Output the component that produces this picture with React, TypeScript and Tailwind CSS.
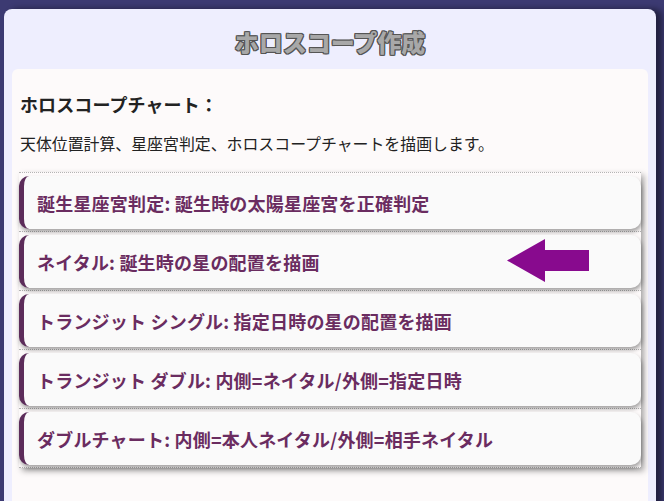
import React from "react";

const items = [
  "誕生星座宮判定: 誕生時の太陽星座宮を正確判定",
  "ネイタル: 誕生時の星の配置を描画",
  "トランジット シングル: 指定日時の星の配置を描画",
  "トランジット ダブル: 内側=ネイタル/外側=指定日時",
  "ダブルチャート: 内側=本人ネイタル/外側=相手ネイタル",
];

export default function App() {
  return (
    <div
      className="h-[501px] overflow-hidden bg-[#3c3a72] pl-[4px] pr-[8px] pt-[9px]"
      style={{ fontFamily: '"Noto Sans CJK JP", "Noto Sans", sans-serif' }}
    >
      <div className="h-[520px] rounded-t-[8px] bg-[#eeeefe] px-[8px] shadow-[6px_0_6px_rgba(0,0,0,0.45)]">
        <div className="pt-[21px] pb-[15px] text-center">
          <h1 className="text-[24px] leading-[24px] font-black text-[#a8a8a8] [text-shadow:1px_1px_0_#555,-1px_-1px_0_#555,1px_-1px_0_#555,-1px_1px_0_#555,1px_0_0_#555,-1px_0_0_#555,0_1px_0_#555,0_-1px_0_#555]">
            ホロスコープ作成
          </h1>
        </div>
        <div className="h-[450px] rounded-t-[6px] bg-[#fdfafa] px-[7px] pt-[23px]">
          <h2 className="pl-[1px] text-[18px] leading-[24px] font-bold tracking-[0.1px] text-[#222]">
            ホロスコープチャート：
          </h2>
          <p className="mt-[18px] pl-[1px] text-[15.9px] leading-[20px] text-[#222]">
            天体位置計算、星座宮判定、ホロスコープチャートを描画します。
          </p>
          <ul className="mt-[18px] border-t border-dotted border-[#b4b4b4] shadow-[3px_3px_6px_rgba(0,0,0,0.35)]">
            {items.map((t, i) => (
              <li
                key={i}
                className="border-b border-dotted border-[#b4b4b4] pt-[3px] pb-[2px]"
              >
                <div className="relative flex h-[53px] items-center rounded-[10px] border-l-[5px] border-[#5c2c5a] bg-[#fafafa] pl-[13px] pt-[2px] shadow-[1px_3px_4px_rgba(0,0,0,0.35)]">
                  <span className="text-[18px] font-bold tracking-[0.2px] text-[#6a2c60]">
                    {t}
                  </span>
                  {i === 1 && (
                    <svg
                      className="absolute right-[52px] top-[4px]"
                      width="82"
                      height="43"
                      viewBox="0 0 82 43"
                    >
                      <polygon
                        points="0,21.5 38,0 38,11 82,11 82,32 38,32 38,43"
                        fill="#880a8e"
                      />
                    </svg>
                  )}
                </div>
              </li>
            ))}
          </ul>
        </div>
      </div>
    </div>
  );
}
